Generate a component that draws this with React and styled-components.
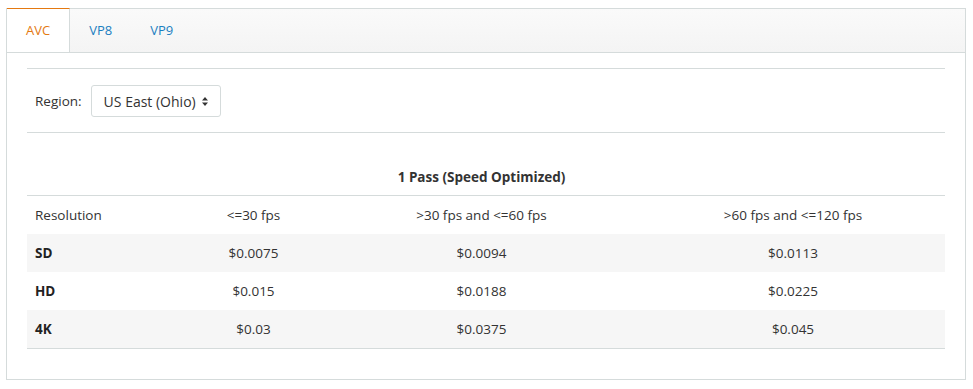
import styled, { createGlobalStyle } from 'styled-components';

const GlobalStyle = createGlobalStyle`
  body {
    margin: 0;
    background: #fff;
    font-family: 'Open Sans', 'Liberation Sans', sans-serif;
    color: #333;
  }
`;

const rows = [
  { name: 'SD', prices: ['$0.0075', '$0.0094', '$0.0113'] },
  { name: 'HD', prices: ['$0.015', '$0.0188', '$0.0225'] },
  { name: '4K', prices: ['$0.03', '$0.0375', '$0.045'] },
];

const tabs = ['AVC', 'VP8', 'VP9'];

const App = () => {
  return (
    <Page>
      <GlobalStyle />
      <Panel>
        <TabBar>
          {tabs.map((t, i) => (
            <Tab key={t} active={i === 0}>
              {t}
            </Tab>
          ))}
        </TabBar>
        <Body>
          <RegionRow>
            <label>Region:</label>
            <Select>
              <span>US East (Ohio)</span>
              {/* up/down caret of the native select */}
              <svg width='6' height='9' viewBox='0 0 6 9'>
                <path d='M0 3.5L3 0l3 3.5z M0 5.5L3 9l3-3.5z' fill='#333' />
              </svg>
            </Select>
          </RegionRow>
          <Table>
            <colgroup>
              <col style={{ width: 158 }} />
              <col style={{ width: 137 }} />
              <col style={{ width: 319 }} />
              <col style={{ width: 304 }} />
            </colgroup>
            <thead>
              <tr>
                <th></th>
                <th></th>
                <th>1 Pass (Speed Optimized)</th>
                <th></th>
              </tr>
            </thead>
            <tbody>
              <tr>
                <td>Resolution</td>
                <td>&lt;=30 fps</td>
                <td>&gt;30 fps and &lt;=60 fps</td>
                <td>&gt;60 fps and &lt;=120 fps</td>
              </tr>
              {rows.map((r) => (
                <tr key={r.name}>
                  <td>
                    <b>{r.name}</b>
                  </td>
                  {r.prices.map((p) => (
                    <td key={p}>{p}</td>
                  ))}
                </tr>
              ))}
            </tbody>
          </Table>
        </Body>
      </Panel>
    </Page>
  );
};

const Page = styled.div`
  padding: 8px 7px 0 6px;
`;

const Panel = styled.div`
  border: 1px solid #d5dbdb;
  height: 372px;
  box-sizing: border-box;
`;

const TabBar = styled.div`
  display: flex;
  height: 43px;
  background: linear-gradient(#fafafa, #f4f4f4);
  border-bottom: 1px solid #d5dbdb;
`;

const Tab = styled.div`
  padding: 0 19px;
  font-size: 13px;
  line-height: 43px;
  color: ${(p) => (p.active ? '#e47911' : '#1b7fc1')};
  background: ${(p) => (p.active ? '#fff' : 'transparent')};
  border-right: ${(p) => (p.active ? '1px solid #d5dbdb' : 'none')};
  border-top: ${(p) => (p.active ? '1px solid #e47911' : 'none')};
  margin-top: ${(p) => (p.active ? '-1px' : '0')};
  height: ${(p) => (p.active ? '44px' : '43px')};
  box-sizing: border-box;
  margin-bottom: ${(p) => (p.active ? '-1px' : '0')};
`;

const Body = styled.div`
  margin: 15px 20px 0 20px;
  border-top: 1px solid #d5dbdb;
`;

const RegionRow = styled.div`
  display: flex;
  align-items: center;
  gap: 9px;
  padding: 16px 8px 15px;
  border-bottom: 1px solid #d5dbdb;
  font-size: 13.5px;
  label {
    color: #333;
  }
`;

const Select = styled.div`
  display: flex;
  align-items: center;
  justify-content: space-between;
  width: 130px;
  height: 32px;
  box-sizing: border-box;
  border: 1px solid #d5dbdb;
  border-radius: 3px;
  padding: 0 12px 0 12px;
  font-size: 14px;
  color: #333;
`;

const Table = styled.table`
  width: 918px;
  table-layout: fixed;
  border-collapse: collapse;
  font-size: 13.5px;
  th {
    height: 62px;
    padding: 0 0 9px;
    vertical-align: bottom;
    box-sizing: border-box;
    font-weight: 700;
    color: #333;
    text-align: center;
    border-bottom: 1px solid #d5dbdb;
  }
  td {
    height: 38px;
    padding: 0 8px;
    text-align: center;
    color: #333;
  }
  td:first-child {
    text-align: left;
  }
  td b {
    color: #222;
  }
  tbody tr:nth-child(even) td {
    background: #f6f6f6;
  }
  tbody tr:last-child td {
    border-bottom: 1px solid #d5dbdb;
  }
`;

export default App;
